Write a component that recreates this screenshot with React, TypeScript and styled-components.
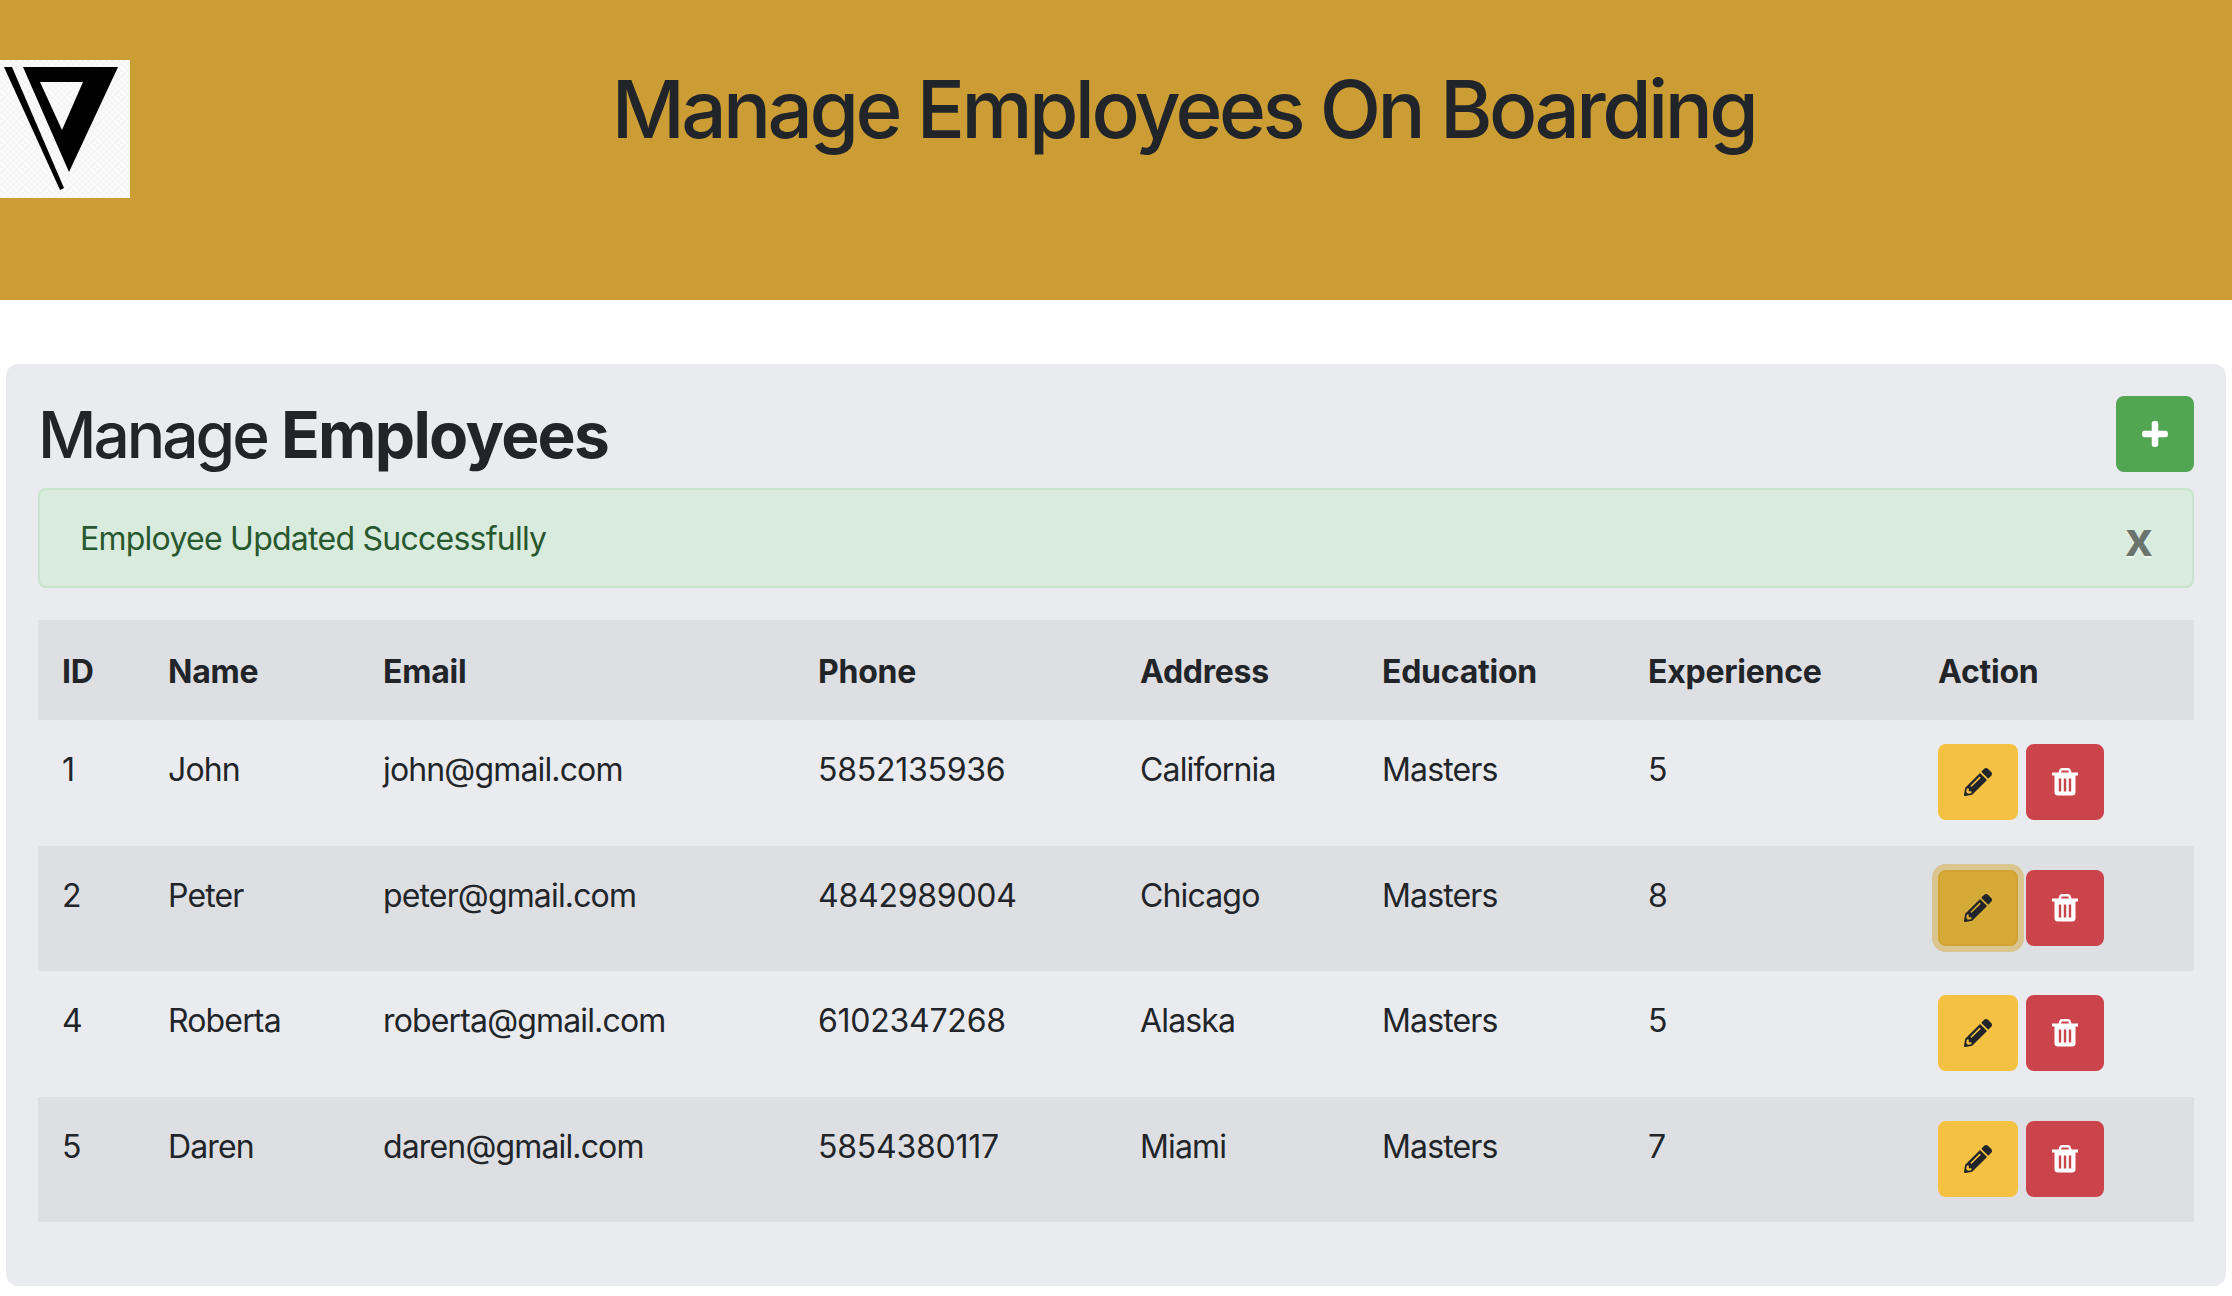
import React from 'react';
import styled, { createGlobalStyle } from 'styled-components';
import { FaPencilAlt, FaPlus } from 'react-icons/fa';

const GlobalStyle = createGlobalStyle`
  html, body {
    margin: 0;
    background: #fff;
    color: #212529;
    font-family: Inter, "Liberation Sans", sans-serif;
    font-size: 32px;
    line-height: 48px;
  }
  * { box-sizing: border-box; }
`;

const Header = styled.header`
  display: flex;
  align-items: flex-start;
  height: 300px;
  padding-top: 60px;
  background: #cb9d34;
`;

const Logo = styled.svg`
  flex: none;
  display: block;
  width: 130px;
  height: 138px;
  background: repeating-conic-gradient(#f5f5f5 0 25%, #fbfbfb 0 50%) 0 0 / 6px 6px;
`;

const Title = styled.h1`
  flex: 1;
  margin: 0;
  padding: 1px 0 0 5px;
  font-size: 80px;
  font-weight: 500;
  line-height: 96px;
  letter-spacing: -3.55px;
  text-align: center;
`;

const Panel = styled.main`
  margin: 64px 6px 0;
  height: 922px;
  padding: 32px 32px 0;
  background: #eaebef;
  border-radius: 12px;
`;

const PanelHead = styled.div`
  display: flex;
  align-items: center;
  justify-content: space-between;
  margin-bottom: 16px;
`;

const PanelTitle = styled.h2`
  margin: 2px 0 0;
  font-size: 64px;
  font-weight: 500;
  line-height: 74px;
  letter-spacing: -3px;

  b {
    font-weight: 700;
    letter-spacing: -1.7px;
  }
`;

const IconButton = styled.button<{ $bg: string; $fg: string; $focus?: boolean }>`
  display: inline-flex;
  align-items: center;
  justify-content: center;
  height: 76px;
  padding: 0;
  border: 2px solid ${(p) => (p.$focus ? '#cfa232' : p.$bg)};
  border-radius: 8px;
  background: ${(p) => (p.$focus ? '#d6aa37' : p.$bg)};
  color: ${(p) => p.$fg};
  font-size: 28px;
  ${(p) => p.$focus && 'box-shadow: 0 0 0 6px #dac58e;'}
`;

const AddButton = styled(IconButton)`
  width: 78px;
`;

const EditButton = styled(IconButton)`
  width: 80px;
`;

const DeleteButton = styled(IconButton)`
  width: 78px;
`;

const PlusIcon = styled(FaPlus)`
  stroke: currentColor;
  stroke-width: 24px;
`;

const Alert = styled.div`
  display: flex;
  align-items: center;
  justify-content: space-between;
  height: 100px;
  padding: 2px 40px 0;
  border: 2px solid #c8e3cd;
  border-radius: 8px;
  background: #d9ebdd;
  color: #28582f;
  letter-spacing: -0.75px;
`;

const Close = styled.span`
  color: #000;
  opacity: 0.5;
  font-size: 48px;
  font-weight: 700;
  line-height: 48px;
  text-shadow: 0 2px 0 #fff;
`;

const Table = styled.table`
  width: 100%;
  margin-top: 32px;
  border-collapse: collapse;
  table-layout: fixed;
`;

const Row = styled.tr<{ $striped?: boolean }>`
  background: ${(p) => (p.$striped ? '#dedfe3' : 'transparent')};
`;

const Th = styled.th`
  height: 100px;
  padding: 26px 24px 22px;
  font-weight: 700;
  text-align: left;
  letter-spacing: -0.25px;
  background: #dedfe3;
`;

const Td = styled.td`
  height: 125.5px;
  padding: 26px 24px 24px;
  vertical-align: top;
  white-space: nowrap;
  letter-spacing: -0.85px;
`;

const PhoneCell = styled(Td)`
  letter-spacing: -0.25px;
`;

const ActionCell = styled(Td)`
  padding: 24px;
`;

const Actions = styled.div`
  display: flex;
  gap: 8px;
`;

const columns = [106, 215, 435, 322, 242, 266, 290, 280];
const headings = ['ID', 'Name', 'Email', 'Phone', 'Address', 'Education', 'Experience', 'Action'];

const employees = [
  { id: 1, name: 'John', email: 'john@gmail.com', phone: '5852135936', address: 'California', education: 'Masters', experience: 5 },
  { id: 2, name: 'Peter', email: 'peter@gmail.com', phone: '4842989004', address: 'Chicago', education: 'Masters', experience: 8 },
  { id: 4, name: 'Roberta', email: 'roberta@gmail.com', phone: '6102347268', address: 'Alaska', education: 'Masters', experience: 5 },
  { id: 5, name: 'Daren', email: 'daren@gmail.com', phone: '5854380117', address: 'Miami', education: 'Masters', experience: 7 },
];

function TrashIcon() {
  return (
    <svg width='26' height='28' viewBox='0 0 26 28' fill='currentColor'>
      <path d='M0 4.5H6.5L7.5 1.5Q8 0 10 0H16Q18 0 18.5 1.5L19.5 4.5H26V7.5H0ZM9 4.5H17L16.3 2.6H9.7Z' fillRule='evenodd' />
      <path
        d='M2.5 7H23.5V24Q23.5 27.5 20 27.5H6Q2.5 27.5 2.5 24ZM6.8 10.5V23.5H9.2V10.5ZM11.8 10.5V23.5H14.2V10.5ZM16.8 10.5V23.5H19.2V10.5Z'
        fillRule='evenodd'
      />
    </svg>
  );
}

export default function App() {
  return (
    <>
      <GlobalStyle />
      <Header>
        <Logo viewBox='0 0 130 138'>
          <path fillRule='evenodd' d='M23 7H118L69 112ZM40 22H83L62 70Z' fill='#000' />
          <path d='M4 7H12L64 128L60 130Z' fill='#000' />
        </Logo>
        <Title>Manage Employees On Boarding</Title>
      </Header>
      <Panel>
        <PanelHead>
          <PanelTitle>
            Manage <b>Employees</b>
          </PanelTitle>
          <AddButton $bg='#52a552' $fg='#fff'>
            <PlusIcon />
          </AddButton>
        </PanelHead>
        <Alert>
          Employee Updated Successfully
          <Close>x</Close>
        </Alert>
        <Table>
          <colgroup>
            {columns.map((width, index) => (
              <col key={index} style={{ width }} />
            ))}
          </colgroup>
          <thead>
            <tr>
              {headings.map((heading) => (
                <Th key={heading}>{heading}</Th>
              ))}
            </tr>
          </thead>
          <tbody>
            {employees.map((employee, index) => (
              <Row key={employee.id} $striped={index % 2 === 1}>
                <Td>{employee.id}</Td>
                <Td>{employee.name}</Td>
                <Td>{employee.email}</Td>
                <PhoneCell>{employee.phone}</PhoneCell>
                <Td>{employee.address}</Td>
                <Td>{employee.education}</Td>
                <Td>{employee.experience}</Td>
                <ActionCell>
                  <Actions>
                    <EditButton $bg='#f5c142' $fg='#212529' $focus={employee.id === 2}>
                      <FaPencilAlt />
                    </EditButton>
                    <DeleteButton $bg='#cc444b' $fg='#fff'>
                      <TrashIcon />
                    </DeleteButton>
                  </Actions>
                </ActionCell>
              </Row>
            ))}
          </tbody>
        </Table>
      </Panel>
    </>
  );
}
